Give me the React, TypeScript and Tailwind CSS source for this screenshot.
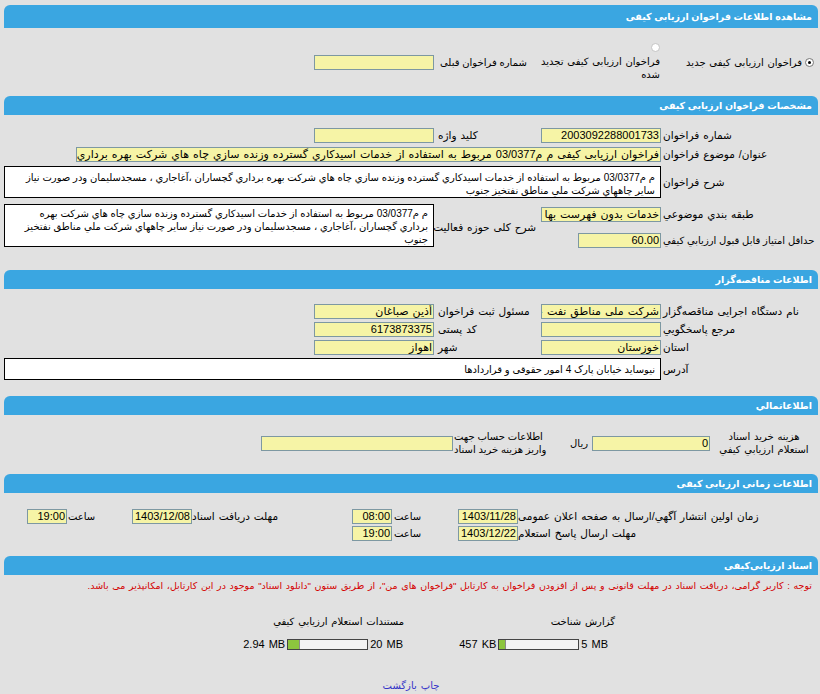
import type { ReactNode } from 'react';

const DESC =
  'م م03/0377 مربوط به استفاده از خدمات اسيدكاري گسترده وزنده سازي چاه هاي شركت بهره برداري گچساران ،آغاجاري ، مسجدسليمان ودر صورت نياز ساير چاههاي شركت ملي مناطق نفتخيز جنوب';

function Section({ title, className = '' }: { title: string; className?: string }) {
  return (
    <div
      className={`flex h-[19px] items-center rounded-t-[6px] bg-[#3aa6e1] px-[6px] text-[9.5px] font-bold text-white ${className}`}
    >
      {title}
    </div>
  );
}

function Field({ value = '', num, className = '' }: { value?: string; num?: boolean; className?: string }) {
  return (
    <div
      className={`h-[15px] shrink-0 overflow-hidden whitespace-nowrap border border-[#7d98a2] bg-[#f6f4a6] px-[1px] text-[11px] leading-[13px] ${
        num ? '' : '[word-spacing:1px]'
      } ${className}`}
    >
      {value}
    </div>
  );
}

function Label({ children, tight, className = '' }: { children: ReactNode; tight?: boolean; className?: string }) {
  return (
    <div
      className={`shrink-0 whitespace-nowrap text-left ${
        tight ? 'text-[10px]' : 'text-[10.5px] [word-spacing:1px]'
      } ${className}`}
    >
      {children}
    </div>
  );
}

function Radio({ checked }: { checked?: boolean }) {
  return (
    <span
      className={`flex h-[9px] w-[9px] shrink-0 items-center justify-center rounded-full border bg-white ${
        checked ? 'border-[#777]' : 'border-[#c4c4c4]'
      }`}
    >
      {checked && <span className="h-[3px] w-[3px] rounded-full bg-black" />}
    </span>
  );
}

function Meter({ used, pct, max }: { used: string; pct: number; max: string }) {
  return (
    <div dir="ltr" className="flex h-[15px] items-center gap-[2px] text-[11px]">
      <span>{used}</span>
      <div className="h-[11px] w-[81px] border border-[#444] bg-[#f3f3f3]">
        <div className="h-full border-r border-[#8a8a8a] bg-[#8dc53e]" style={{ width: `${pct}%` }} />
      </div>
      <span>{max}</span>
    </div>
  );
}

export default function App() {
  return (
    <div
      dir="rtl"
      className="h-[694px] w-[820px] overflow-hidden bg-[#e1e1e1] pl-[4px] pr-[2px] pt-[5px] font-['Liberation_Sans','DejaVu_Sans',sans-serif] text-[10px] leading-[13px] text-black"
    >
      <Section title="مشاهده اطلاعات فراخوان ارزیابی کیفی" className="!h-[23px]" />

      {/* نوع فراخوان */}
      <div className="flex h-[68px] items-center">
        <div className="flex w-[157px] shrink-0 items-center gap-[3px] whitespace-nowrap pr-[4px] [word-spacing:1px]">
          <Radio checked />
          <span>فراخوان ارزیابی کیفی جدید</span>
        </div>
        <div className="flex w-[125px] shrink-0 flex-col items-start whitespace-nowrap pr-[1px] [word-spacing:1px]">
          <div className="mb-[3px]">
            <Radio />
          </div>
          <span>
            فراخوان ارزیابی کیفی تجدید
            <br />
            شده
          </span>
        </div>
        <div className="w-[102px] shrink-0 whitespace-nowrap pl-[6px] text-left">شماره فراخوان قبلی</div>
        <Field className="w-[120px]" />
      </div>

      <Section title="مشخصات فراخوان ارزیابی کیفی" />

      <div className="mt-[11px] flex h-[19px] items-center">
        <Label className="w-[157px] pl-[2px]">شماره فراخوان</Label>
        <div className="w-[125px] shrink-0">
          <Field num className="w-[120px]" value="2003092288001733" />
        </div>
        <Label className="w-[102px] pl-[4px]">کلید واژه</Label>
        <Field className="w-[120px]" />
      </div>
      <div className="flex h-[19px] items-center">
        <Label className="w-[157px] pl-[2px]">عنوان/ موضوع فراخوان</Label>
        <Field className="w-[585px]" value={'فراخوان ارزیابی کیفی ' + DESC} />
      </div>
      <div className="flex h-[36px] items-center">
        <Label className="w-[157px] pl-[2px]">شرح فراخوان</Label>
        <div className="h-[32px] w-[657px] shrink-0 overflow-hidden border border-black bg-white px-[5px] pt-[4px]">
          {DESC}
        </div>
      </div>
      <div className="flex">
        <div className="w-[282px] shrink-0">
          <div className="flex h-[28px] items-center">
            <Label className="w-[157px] pl-[2px]">طبقه بندي موضوعي</Label>
            <Field className="w-[120px]" value="خدمات بدون فهرست بها" />
          </div>
          <div className="flex h-[24px] items-center">
            <Label tight className="w-[157px] pl-[2px]">
              حداقل امتیاز قابل قبول ارزیابي کیفي
            </Label>
            <Field num className="w-[83px]" value="60.00" />
          </div>
        </div>
        <Label className="w-[102px] self-center pl-[4px] pt-[2px]">شرح کلی حوزه فعالیت</Label>
        <div className="mt-[4px] h-[43px] w-[430px] shrink-0 overflow-hidden border border-black bg-white px-[5px] pt-[2px]">
          {DESC}
        </div>
      </div>

      <Section title="اطلاعات مناقصه‌گزار" className="mt-[18px]" />

      <div className="mt-[13px] flex h-[18px] items-center">
        <Label className="w-[157px] pl-[2px]">نام دستگاه اجرایی مناقصه‌گزار</Label>
        <div className="w-[125px] shrink-0">
          <Field className="w-[120px]" value="شرکت ملی مناطق نفت خیز جنوب" />
        </div>
        <Label className="w-[102px] pl-[4px]">مسئول ثبت فراخوان</Label>
        <Field className="w-[120px]" value="أذین صباغان" />
      </div>
      <div className="flex h-[18px] items-center">
        <Label className="w-[157px] pl-[2px]">مرجع پاسخگويي</Label>
        <div className="w-[125px] shrink-0">
          <Field className="w-[120px]" />
        </div>
        <Label className="w-[102px] pl-[4px]">کد پستی</Label>
        <Field num className="w-[120px]" value="6173873375" />
      </div>
      <div className="flex h-[18px] items-center">
        <Label className="w-[157px] pl-[2px]">استان</Label>
        <div className="w-[125px] shrink-0">
          <Field className="w-[120px]" value="خوزستان" />
        </div>
        <Label className="w-[102px] pl-[4px]">شهر</Label>
        <Field className="w-[120px]" value="اهواز" />
      </div>
      <div className="flex h-[26px] items-center">
        <Label className="w-[157px] pl-[2px]">آدرس</Label>
        <div className="flex h-[22px] w-[657px] shrink-0 items-center border border-black bg-white px-[5px]">
          نیوساید خیابان پارک 4 امور حقوقی و قراردادها
        </div>
      </div>

      <Section title="اطلاعاتمالي" className="mt-[14px]" />

      <div className="mt-[14px] flex h-[28px] items-center">
        <div className="w-[108px] shrink-0 whitespace-nowrap text-center [word-spacing:1px]">
          هزینه خرید اسناد
          <br />
          استعلام ارزیابي کیفي
        </div>
        <Field num className="w-[118px]" value="0" />
        <div className="w-[45px] shrink-0 pr-[4px]">ریال</div>
        <Label tight className="w-[94px] pl-[1px] leading-[13px]">
          اطلاعات حساب جهت
          <br />
          واریز هزینه خرید اسناد
        </Label>
        <Field className="w-[192px]" />
      </div>

      <Section title="اطلاعات زمانی ارزیابی کیفی" className="mt-[17px]" />

      <div className="mt-[14px] flex h-[18px] items-center">
        <Label className="w-[300px]">زمان اولین انتشار آگهي/ارسال به صفحه اعلان عمومی</Label>
        <Field num className="w-[60px]" value="1403/11/28" />
        <div className="w-[66px] shrink-0 pl-[2px] text-left">ساعت</div>
        <Field num className="w-[40px]" value="08:00" />
        <Label className="w-[160px]">مهلت دریافت اسناد</Label>
        <Field num className="w-[60px]" value="1403/12/08" />
        <div className="w-[65px] shrink-0 pl-[1px] text-left">ساعت</div>
        <Field num className="w-[40px]" value="19:00" />
      </div>
      <div className="flex h-[16px] items-center">
        <Label className="w-[300px]">مهلت ارسال پاسخ استعلام</Label>
        <Field num className="w-[60px]" value="1403/12/22" />
        <div className="w-[66px] shrink-0 pl-[2px] text-left">ساعت</div>
        <Field num className="w-[40px]" value="19:00" />
      </div>

      <Section title="اسناد ارزیابی‌کیفی" className="mt-[15px]" />

      <div className="mt-[2px] flex h-[16px] items-center whitespace-nowrap pr-[6px] text-[9.5px] text-[#d40000] [word-spacing:1px]">
        توجه : کاربر گرامی، دریافت اسناد در مهلت قانونی و پس از افزودن فراخوان به کارتابل "فراخوان های من"، از طریق ستون "دانلود اسناد" موجود در این کارتابل، امکانپذیر می باشد.
      </div>

      <div className="mt-[22px] flex pr-[203px] [word-spacing:1px]">
        <div className="flex w-[211px] shrink-0 flex-col items-start">
          <div className="h-[14px] leading-[14px]">گزارش شناخت</div>
          <div className="mr-[7px] mt-[8px]">
            <Meter used="457 KB" pct={9} max="5 MB" />
          </div>
        </div>
        <div className="flex flex-col items-start">
          <div className="h-[14px] leading-[14px]">مستندات استعلام ارزیابي کیفي</div>
          <div className="mr-[1px] mt-[8px]">
            <Meter used="2.94 MB" pct={15} max="20 MB" />
          </div>
        </div>
      </div>

      <div className="mt-[27px] flex justify-center gap-[4px] text-[#3434c8]">
        <a href="#">چاپ</a>
        <a href="#">بازگشت</a>
      </div>
    </div>
  );
}
